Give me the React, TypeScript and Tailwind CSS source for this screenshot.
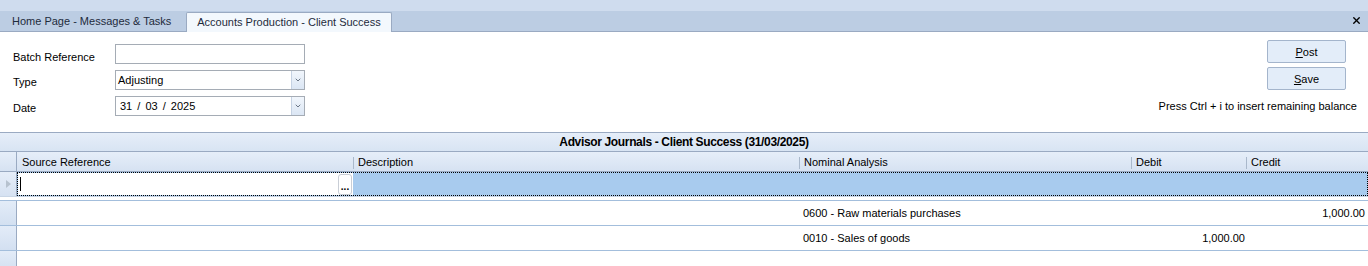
import { ChevronDown, X } from "lucide-react";

const cols = [
  { label: "Source Reference", w: "w-[336px]" },
  { label: "Description", w: "w-[446px]" },
  { label: "Nominal Analysis", w: "w-[332px]" },
  { label: "Debit", w: "w-[115px]" },
  { label: "Credit", w: "flex-1" },
];

const rows = [
  { nominal: "0600 - Raw materials purchases", debit: "", credit: "1,000.00" },
  { nominal: "0010 - Sales of goods", debit: "1,000.00", credit: "" },
];

function Combo({ value, date }: { value: string; date?: boolean }) {
  return (
    <div className="flex h-[20px] w-[190px] items-center border border-[#a5acb5] bg-white">
      <span className={date ? "flex-1 pl-[4px] [word-spacing:2px]" : "flex-1 pl-[2px]"}>{value}</span>
      <span className="flex h-[18px] w-[13px] items-center justify-center border-l border-[#c5d2e3] bg-gradient-to-b from-[#f1f6fc] to-[#dbe6f4]">
        <ChevronDown size={8} strokeWidth={3} className="text-[#6b7686]" />
      </span>
    </div>
  );
}

function Btn({ label, rest }: { label: string; rest: string }) {
  return (
    <button className="flex h-[23px] w-[79px] items-center justify-center rounded-[2px] border border-[#a4b5cc] bg-[#e3edf9] pt-[2px] text-[11px] text-black">
      <span className="underline">{label}</span>
      {rest}
    </button>
  );
}

export default function App() {
  return (
    <div className="h-[266px] w-[1368px] overflow-hidden bg-white text-[11px] leading-none text-black [font-family:'Liberation_Sans',Arial,sans-serif]">
      <div className="h-[11px] bg-[#cfdcee]" />
      <div className="flex h-[21px] items-end border-b border-[#9aaac2] bg-[#bccde3]">
        <div className="flex h-[19px] w-[186px] items-center pl-[12px] text-[#1e2b3c]">Home Page - Messages &amp; Tasks</div>
        <div className="-mb-px flex h-[20px] w-[206px] items-center justify-center rounded-t-[2px] border border-b-0 border-[#9aaac2] bg-[#f3f8fd] text-[#1e2b3c]">
          Accounts Production - Client Success
        </div>
        <div className="flex-1" />
        <div className="mb-[5px] mr-[6px]">
          <X size={11} strokeWidth={3} className="text-black" />
        </div>
      </div>

      <div className="flex h-[100px] justify-between">
        <div className="flex flex-col gap-[6px] pl-[13px] pt-[12px]">
          <div className="flex items-center">
            <span className="w-[102px] pt-[6px]">Batch Reference</span>
            <div className="h-[20px] w-[190px] border border-[#a5acb5] bg-white" />
          </div>
          <div className="flex items-center">
            <span className="w-[102px] pt-[5px]">Type</span>
            <Combo value="Adjusting" />
          </div>
          <div className="flex items-center">
            <span className="w-[102px] pt-[5px]">Date</span>
            <Combo value="31 / 03 / 2025" date />
          </div>
        </div>
        <div className="flex flex-col items-end pr-[11px] pt-[8px]">
          <div className="mr-[11px] flex flex-col gap-[4px]">
            <Btn label="P" rest="ost" />
            <Btn label="S" rest="ave" />
          </div>
          <div className="mt-[11px]">Press Ctrl + i to insert remaining balance</div>
        </div>
      </div>

      <div className="border-t border-[#9aaac2]">
        <div className="flex h-[19px] items-center justify-center border-b border-[#9aaac2] bg-gradient-to-b from-[#e6eef9] to-[#d8e4f3] text-[12px] font-bold tracking-[-0.35px]">
          Advisor Journals - Client Success (31/03/2025)
        </div>
        <div className="flex h-[20px] border-b border-[#9aaac2] bg-gradient-to-b from-[#e6eef9] to-[#d6e2f2]">
          <div className="w-[17px] border-r border-[#9aaac2]" />
          {cols.map((c, i) => (
            <div key={c.label} className={`${c.w} flex items-center pl-[5px] pt-[2px]`}>
              {i > 0 && <span className="-ml-[5px] mr-[4px] h-[12px] border-l border-[#a9b8cb]" />}
              {c.label}
            </div>
          ))}
        </div>

        <div className="flex h-[25px] border-b border-[#c9d6e6]">
          <div className="flex w-[17px] items-center justify-center border-r border-[#9aaac2] bg-gradient-to-b from-[#e6eef9] to-[#d6e2f2]">
            <span className="h-0 w-0 border-y-[4px] border-l-[5px] border-y-transparent border-l-[#b7c2cf]" />
          </div>
          <div className="flex flex-1 border border-dotted border-black bg-[#a8cbee]">
            <div className="flex w-[335px] items-center bg-white pl-[2px]">
              <span className="h-[14px] border-l border-black" />
              <div className="flex-1" />
              <span className="mr-px flex h-[21px] w-[14px] items-end justify-center rounded-[3px] border border-[#c9ced6] bg-white pb-[2px] text-[10px] font-bold leading-none">
                ...
              </span>
            </div>
          </div>
        </div>

        <div className="h-[3px]" />
        {rows.map((r) => (
          <div key={r.nominal} className="flex h-[25px] border-t border-[#a3bedc]">
            <div className="w-[17px] border-r border-[#9aaac2] bg-gradient-to-b from-[#e3ecf8] to-[#d3e0f1]" />
            <div className="w-[336px]" />
            <div className="w-[446px]" />
            <div className="flex w-[332px] items-center pl-[4px]">{r.nominal}</div>
            <div className="flex w-[115px] items-center justify-end pr-[1px]">{r.debit}</div>
            <div className="flex flex-1 items-center justify-end pr-[3px]">{r.credit}</div>
          </div>
        ))}
        <div className="flex h-[20px] border-t border-[#a3bedc]">
          <div className="w-[17px] border-r border-[#9aaac2] bg-gradient-to-b from-[#e3ecf8] to-[#d3e0f1]" />
        </div>
      </div>
    </div>
  );
}
